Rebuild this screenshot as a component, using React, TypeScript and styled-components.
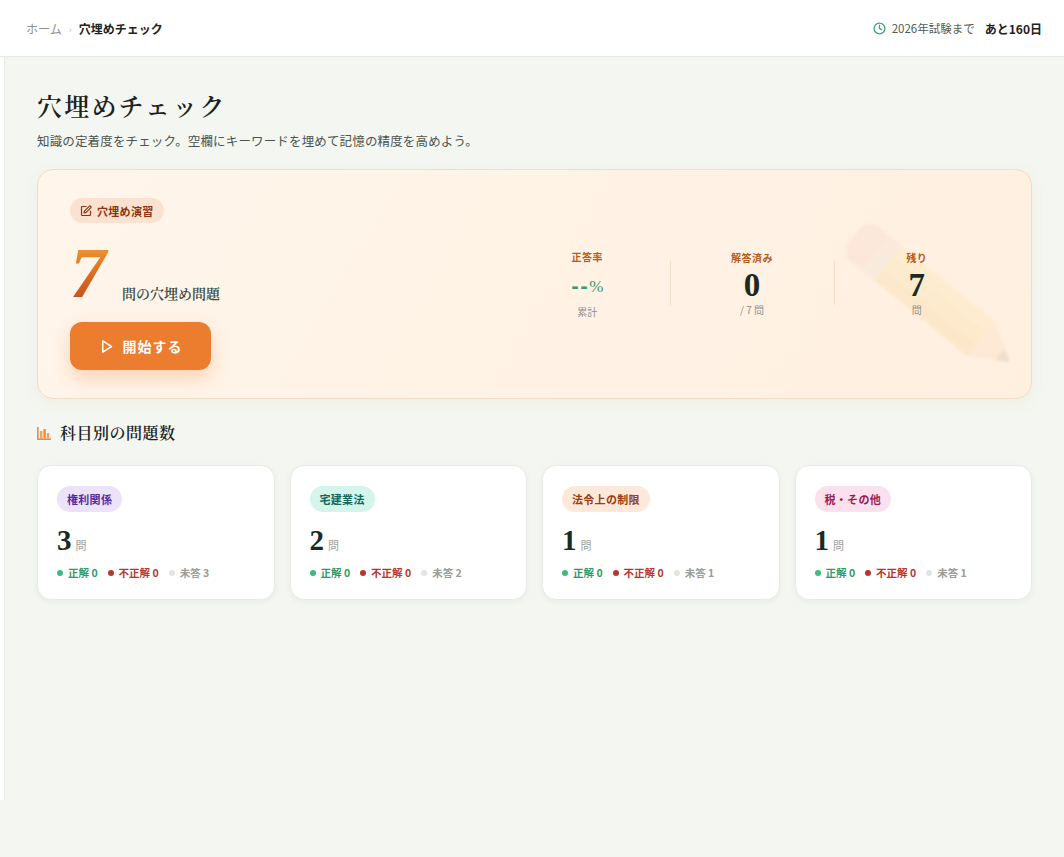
import React from "react";
import styled, { createGlobalStyle } from "styled-components";

const GlobalStyle = createGlobalStyle`
  * { box-sizing: border-box; }
  html, body { margin: 0; padding: 0; }
  body {
    background: #f3f6f1;
    font-family: "Noto Sans CJK JP", "Noto Sans", sans-serif;
    color: #1f2a22;
  }
`;

const SERIF = `"Noto Serif CJK JP", "Liberation Serif", "Noto Sans CJK JP", serif`;
const NUM = `"Liberation Serif", "DejaVu Serif", serif`;

const Header = styled.header`
  height: 57px;
  background: #ffffff;
  border-bottom: 1px solid #e4e8e2;
  display: flex;
  align-items: center;
  justify-content: space-between;
  padding: 0 22px 0 26px;
`;

const Crumbs = styled.nav`
  display: flex;
  align-items: center;
  gap: 7px;
  font-size: 12px;
`;

const CrumbLink = styled.span`
  color: #8d918c;
`;

const CrumbSep = styled.span`
  color: #c4c7c2;
  font-size: 10px;
`;

const CrumbCurrent = styled.span`
  color: #1d231f;
  font-weight: 700;
`;

const Countdown = styled.div`
  display: flex;
  align-items: center;
  gap: 6px;
  font-size: 11.5px;
  color: #555b56;
`;

const CountStrong = styled.span`
  font-weight: 700;
  font-size: 12px;
  color: #1d231f;
  margin-left: 4px;
`;

const Body = styled.div`
  display: flex;
  align-items: flex-start;
`;

const Rail = styled.aside`
  width: 5px;
  height: 743px;
  flex: none;
  background: #ffffff;
  border-right: 1px solid #e6e9e4;
`;

const Main = styled.main`
  flex: 1;
  padding: 30px 32px 40px 32px;
`;

const Title = styled.h1`
  margin: 0;
  font-family: ${SERIF};
  font-size: 25px;
  font-weight: 600;
  letter-spacing: 2.2px;
  color: #1b221d;
  line-height: 36px;
`;

const Lead = styled.p`
  margin: 8px 0 0;
  font-size: 12.5px;
  color: #4d534e;
  letter-spacing: 0.15px;
`;

const Hero = styled.section`
  position: relative;
  overflow: hidden;
  margin-top: 19px;
  height: 230px;
  border-radius: 16px;
  border: 1px solid #f2dcc3;
  background: linear-gradient(120deg, #fff5eb 0%, #fff3e6 50%, #ffefdf 100%);
  box-shadow: 0 4px 14px rgba(230, 150, 80, 0.08);
  display: flex;
  align-items: stretch;
  justify-content: space-between;
  padding: 28px 32px 28px 32px;
`;

const HeroLeft = styled.div`
  display: flex;
  flex-direction: column;
  align-items: flex-start;
`;

const Tag = styled.span<{ $bg: string; $fg: string }>`
  display: inline-flex;
  align-items: center;
  gap: 5px;
  height: 26px;
  padding: 0 10px;
  border-radius: 13px;
  background: ${(p) => p.$bg};
  color: ${(p) => p.$fg};
  font-size: 11px;
  font-weight: 700;
  letter-spacing: 0.3px;
`;

const HeroTag = styled(Tag)`
  padding: 0 10px 0 10px;
`;

const BigRow = styled.div`
  display: flex;
  align-items: flex-end;
  gap: 12px;
  margin-top: 20px;
  height: 60px;
`;

const BigNum = styled.span`
  font-family: ${NUM};
  font-style: italic;
  font-weight: 700;
  font-size: 72px;
  line-height: 60px;
  background: linear-gradient(180deg, #ef9a34 0%, #d9661f 60%, #c4501a 100%);
  -webkit-background-clip: text;
  background-clip: text;
  color: transparent;
  padding-right: 4px;
`;

const BigLabel = styled.span`
  font-family: ${SERIF};
  font-size: 14px;
  font-weight: 600;
  color: #3b4a3f;
`;

const StartButton = styled.button`
  margin-top: 19px;
  width: 141px;
  height: 49px;
  border: none;
  border-radius: 12px;
  background: #ec7d2f;
  color: #ffffff;
  font-family: "Noto Sans CJK JP", sans-serif;
  font-size: 14px;
  font-weight: 700;
  letter-spacing: 1px;
  display: flex;
  align-items: center;
  justify-content: center;
  gap: 9px;
  box-shadow: 0 8px 18px rgba(236, 125, 47, 0.28);
  cursor: pointer;
`;

const Stats = styled.div`
  position: relative;
  z-index: 1;
  width: 494px;
  display: grid;
  grid-template-columns: repeat(3, 1fr);
  align-items: center;
  align-self: center;
  margin-top: 0px;
`;

const Stat = styled.div<{ $divider?: boolean }>`
  display: flex;
  flex-direction: column;
  align-items: center;
  position: relative;
  &::before {
    content: "";
    display: ${(p) => (p.$divider ? "block" : "none")};
    position: absolute;
    left: 0;
    top: 10px;
    bottom: 12px;
    width: 1px;
    background: #f3dfc8;
  }
`;

const StatLabel = styled.span`
  font-size: 10px;
  font-weight: 700;
  color: #b85a1a;
  letter-spacing: 0.5px;
  line-height: 14px;
`;

const StatValue = styled.span`
  font-family: ${NUM};
  font-weight: 700;
  font-size: 33px;
  line-height: 36px;
  height: 36px;
  display: flex;
  align-items: center;
  color: #1c2a20;
  margin-top: 2px;
`;

const RateValue = styled.span`
  font-family: "DejaVu Sans", sans-serif;
  font-weight: 700;
  font-size: 18px;
  height: 36px;
  line-height: 36px;
  margin-top: 5px;
  color: #3a9a6c;
  display: flex;
  align-items: center;
  letter-spacing: 1.5px;
`;

const Percent = styled.span`
  font-family: ${NUM};
  font-weight: 400;
  font-size: 17px;
  letter-spacing: 0;
`;

const StatSub = styled.span`
  font-size: 10px;
  color: #8f8f88;
  line-height: 14px;
  margin-top: 0px;
`;

const PencilDeco = styled.svg`
  position: absolute;
  right: 4px;
  top: 54px;
  width: 190px;
  height: 150px;
  opacity: 0.12;
  filter: blur(1.5px);
  pointer-events: none;
`;

const SectionHead = styled.h2`
  display: flex;
  align-items: center;
  gap: 9px;
  margin: 23px 0 0;
  font-family: ${SERIF};
  font-size: 16px;
  font-weight: 600;
  color: #1b221d;
  letter-spacing: 0.5px;
  line-height: 22px;
`;

const Grid = styled.div`
  display: grid;
  grid-template-columns: repeat(4, 1fr);
  gap: 15px;
  margin-top: 21px;
`;

const Card = styled.div`
  background: #ffffff;
  border: 1px solid #e8ebe6;
  border-radius: 14px;
  height: 135px;
  padding: 20px 19px 0;
  box-shadow: 0 2px 6px rgba(30, 50, 30, 0.05);
  display: flex;
  flex-direction: column;
  align-items: flex-start;
`;

const CountRow = styled.div`
  display: flex;
  align-items: baseline;
  gap: 4px;
  margin-top: 12px;
`;

const CountNum = styled.span`
  font-family: ${NUM};
  font-weight: 700;
  font-size: 29px;
  line-height: 32px;
  color: #1c2a20;
`;

const CountUnit = styled.span`
  font-size: 11px;
  color: #9a9d98;
`;

const Legend = styled.div`
  display: flex;
  align-items: center;
  gap: 10px;
  margin-top: 9px;
`;

const LegendItem = styled.span<{ $color: string; $dot: string }>`
  display: inline-flex;
  align-items: center;
  gap: 5px;
  font-size: 10.5px;
  font-weight: 700;
  color: ${(p) => p.$color};
  &::before {
    content: "";
    width: 6px;
    height: 6px;
    border-radius: 50%;
    background: ${(p) => p.$dot};
  }
`;

const subjects = [
  { name: "権利関係", bg: "#ece3fb", fg: "#5a2a9c", count: 3 },
  { name: "宅建業法", bg: "#d3f5ec", fg: "#16675a", count: 2 },
  { name: "法令上の制限", bg: "#fde8da", fg: "#983c14", count: 1 },
  { name: "税・その他", bg: "#fbe0ee", fg: "#9a1c55", count: 1 },
];

const ClockIcon = () => (
  <svg width="13" height="13" viewBox="0 0 24 24" fill="none" stroke="#3aa57a" strokeWidth="2.4" strokeLinecap="round" strokeLinejoin="round">
    <circle cx="12" cy="12" r="10" />
    <polyline points="12 6 12 12 16 14" />
  </svg>
);

const EditIcon = () => (
  <svg width="12" height="12" viewBox="0 0 24 24" fill="none" stroke="currentColor" strokeWidth="2.4" strokeLinecap="round" strokeLinejoin="round">
    <path d="M12 3H5a2 2 0 0 0-2 2v14a2 2 0 0 0 2 2h14a2 2 0 0 0 2-2v-7" />
    <path d="M18.375 2.625a1 1 0 0 1 3 3l-9.013 9.014a2 2 0 0 1-.853.505l-2.873.84a.5.5 0 0 1-.62-.62l.84-2.873a2 2 0 0 1 .506-.852z" />
  </svg>
);

const PlayIcon = () => (
  <svg width="15" height="15" viewBox="0 0 24 24" fill="none" stroke="#ffffff" strokeWidth="2.4" strokeLinecap="round" strokeLinejoin="round">
    <polygon points="6 3 20 12 6 21 6 3" />
  </svg>
);

const ChartIcon = () => (
  <svg width="14" height="13" viewBox="0 0 14 13">
    <rect x="0" y="0" width="1.6" height="13" fill="#ee8a3c" />
    <rect x="0" y="11.4" width="14" height="1.6" fill="#ee8a3c" />
    <rect x="3" y="4" width="2.4" height="7.4" fill="#f2a25e" />
    <rect x="6.4" y="2" width="2.4" height="9.4" fill="#ee8a3c" />
    <rect x="9.8" y="6" width="2.4" height="5.4" fill="#f2a25e" />
  </svg>
);

const Pencil = () => (
  <PencilDeco viewBox="0 0 190 150">
    <g transform="translate(95 75) rotate(39) translate(-100 -22)">
      <rect x="0" y="0" width="34" height="44" rx="13" fill="#e9a0a0" />
      <rect x="26" y="0" width="18" height="44" fill="#c9c2b8" />
      <rect x="44" y="0" width="120" height="44" fill="#f4c13a" />
      <rect x="44" y="0" width="120" height="14" fill="#f8d463" />
      <rect x="44" y="30" width="120" height="14" fill="#e9ad2a" />
      <polygon points="164,0 164,44 200,22" fill="#efc28c" />
      <polygon points="188,15 188,29 200,22" fill="#6b5a4a" />
    </g>
  </PencilDeco>
);

export default function App() {
  return (
    <>
      <GlobalStyle />
      <Header>
        <Crumbs>
          <CrumbLink>ホーム</CrumbLink>
          <CrumbSep>›</CrumbSep>
          <CrumbCurrent>穴埋めチェック</CrumbCurrent>
        </Crumbs>
        <Countdown>
          <ClockIcon />
          <span>2026年試験まで</span>
          <CountStrong>あと160日</CountStrong>
        </Countdown>
      </Header>
      <Body>
        <Rail />
        <Main>
          <Title>穴埋めチェック</Title>
          <Lead>知識の定着度をチェック。空欄にキーワードを埋めて記憶の精度を高めよう。</Lead>

          <Hero>
            <Pencil />
            <HeroLeft>
              <HeroTag $bg="#fbe2d0" $fg="#8a3512">
                <EditIcon />
                穴埋め演習
              </HeroTag>
              <BigRow>
                <BigNum>7</BigNum>
                <BigLabel>問の穴埋め問題</BigLabel>
              </BigRow>
              <StartButton>
                <PlayIcon />
                開始する
              </StartButton>
            </HeroLeft>
            <Stats>
              <Stat>
                <StatLabel>正答率</StatLabel>
                <RateValue>
                  --<Percent>%</Percent>
                </RateValue>
                <StatSub>累計</StatSub>
              </Stat>
              <Stat $divider>
                <StatLabel>解答済み</StatLabel>
                <StatValue>0</StatValue>
                <StatSub>/ 7 問</StatSub>
              </Stat>
              <Stat $divider>
                <StatLabel>残り</StatLabel>
                <StatValue>7</StatValue>
                <StatSub>問</StatSub>
              </Stat>
            </Stats>
          </Hero>

          <SectionHead>
            <ChartIcon />
            科目別の問題数
          </SectionHead>

          <Grid>
            {subjects.map((s) => (
              <Card key={s.name}>
                <Tag $bg={s.bg} $fg={s.fg}>{s.name}</Tag>
                <CountRow>
                  <CountNum>{s.count}</CountNum>
                  <CountUnit>問</CountUnit>
                </CountRow>
                <Legend>
                  <LegendItem $color="#2f9a68" $dot="#3dbb7e">正解 0</LegendItem>
                  <LegendItem $color="#b8352e" $dot="#b8352e">不正解 0</LegendItem>
                  <LegendItem $color="#9a9d98" $dot="#e2e4e0">未答 {s.count}</LegendItem>
                </Legend>
              </Card>
            ))}
          </Grid>
        </Main>
      </Body>
    </>
  );
}
